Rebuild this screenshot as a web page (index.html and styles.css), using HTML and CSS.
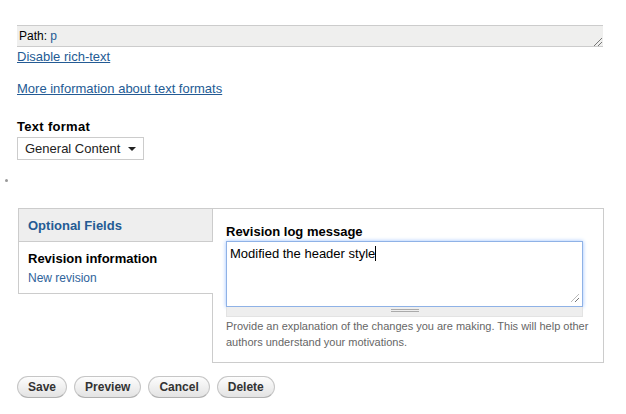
FILE: index.html
```html
<!DOCTYPE html>
<html>
  <head>
    <title>Edit page</title>
    <link rel="stylesheet" href="styles.css">
  </head>
  <body>
    <div class="page">
      <div class="path-bar">
        <span>Path: <a href="#">p</a></span>
        <span class="grip"></span>
      </div>
      <div class="toggle-link"><a href="#">Disable rich-text</a></div>
      <div class="format-link"><a href="#">More information about text formats</a></div>

      <div class="format-field">
        <label class="field-label">Text format</label>
        <div class="select">
          <span>General Content</span>
          <span class="select-arrow"></span>
        </div>
      </div>
    </div>

    <div class="bullet"></div>

    <div class="vtabs">
      <div class="vtabs-menu">
        <div class="vtab-head">Optional Fields</div>
        <div class="vtab-item active">
          <strong>Revision information</strong>
          <span class="summary">New revision</span>
        </div>
      </div>
      <div class="vtabs-pane">
        <label class="field-label">Revision log message</label>
        <div class="textarea-wrap">
          <div class="textarea">Modified the header style<span class="caret"></span><span class="grip"></span></div>
          <div class="grippie"></div>
        </div>
        <div class="description">
          Provide an explanation of the changes you are making. This will help other
          authors understand your motivations.
        </div>
      </div>
    </div>

    <div class="actions">
      <button>Save</button>
      <button>Preview</button>
      <button>Cancel</button>
      <button>Delete</button>
    </div>
  </body>
</html>
```

FILE: styles.css
```css
:root {
  --link-color: #245b94;
  --border-color: #cccccc;
  --bar-bg: #efefee;
}

* {
  box-sizing: border-box;
}

body {
  font-family: "Liberation Sans", Arial, sans-serif;
  font-size: 12px;
  margin: 0;
  padding-top: 25px;
  background: #ffffff;
  color: #000000;
}

a {
  color: var(--link-color);
}

.page {
  margin: 0 23px 0 17px;
}

.path-bar {
  display: flex;
  justify-content: space-between;
  align-items: center;
  height: 22px;
  padding: 0 1px 0 2px;
  border-top: 1px solid var(--border-color);
  border-bottom: 1px solid var(--border-color);
  background-color: var(--bar-bg);
  line-height: 20px;
}

.path-bar a {
  text-decoration: none;
}

.grip {
  width: 10px;
  height: 10px;
  align-self: flex-end;
  background: repeating-linear-gradient(
    135deg,
    transparent 0,
    transparent 2px,
    #777 2px,
    #777 3px
  );
  clip-path: polygon(100% 0, 100% 100%, 0 100%);
}

.toggle-link {
  margin-top: 1px;
  font-size: 13px;
  line-height: 18px;
}

.format-link {
  margin-top: 14px;
  font-size: 13px;
  line-height: 18px;
}

.format-field {
  margin-top: 21px;
}

.field-label {
  display: block;
  font-size: 13px;
  font-weight: bold;
  line-height: 16px;
}

.format-field .field-label {
  letter-spacing: 0.3px;
}

.select {
  display: inline-flex;
  align-items: center;
  justify-content: space-between;
  width: 127px;
  height: 23px;
  margin-top: 2px;
  padding: 0 7px 0 7px;
  border: 1px solid var(--border-color);
  font-size: 13px;
  color: #222;
}

.select-arrow {
  width: 0;
  height: 0;
  border-left: 4px solid transparent;
  border-right: 4px solid transparent;
  border-top: 4px solid #222;
}

.bullet {
  width: 3px;
  height: 3px;
  margin: 19px 0 0 5px;
  border-radius: 50%;
  background-color: #999;
}

.vtabs {
  display: flex;
  align-items: flex-start;
  margin: 26px 22px 0 18px;
}

.vtabs-menu {
  flex-shrink: 0;
  width: 195px;
  border: 1px solid var(--border-color);
  border-right: none;
  position: relative;
  z-index: 1;
}

.vtab-head {
  height: 33px;
  padding: 9px 9px 7px;
  border-right: 1px solid var(--border-color);
  border-bottom: 1px solid var(--border-color);
  background-color: #eeeeee;
  color: var(--link-color);
  font-size: 13px;
  font-weight: bold;
  line-height: 16px;
}

.vtab-item {
  height: 51px;
  margin-right: -1px;
  padding: 8px 9px 0;
  background-color: #ffffff;
}

.vtab-item strong {
  display: block;
  font-size: 13px;
  line-height: 17px;
}

.summary {
  display: block;
  margin-top: 3px;
  color: #2f639b;
  line-height: 16px;
}

.vtabs-pane {
  flex: 1;
  height: 155px;
  margin-left: -1px;
  padding: 15px 20px 0 13px;
  border: 1px solid var(--border-color);
}

.textarea-wrap {
  margin-top: 1px;
}

.textarea {
  display: flex;
  height: 66px;
  padding: 4px 3px;
  border: 1px solid #8fb2e6;
  box-shadow: 0 0 4px #9cc2ff;
  font-size: 13px;
  line-height: 16px;
}

.caret {
  width: 1px;
  height: 15px;
  background-color: #000;
}

.textarea .grip {
  margin-left: auto;
  width: 8px;
  height: 8px;
}

.grippie {
  height: 10px;
  border: 1px solid #e3e3e3;
  border-top: none;
  background-color: #eeeeee;
  background-image: linear-gradient(
    #eee 3px,
    #aaa 3px,
    #aaa 4px,
    #eee 4px,
    #eee 5px,
    #aaa 5px,
    #aaa 6px,
    #eee 6px
  );
  background-size: 28px 10px;
  background-position: center;
  background-repeat: no-repeat;
}

.description {
  margin: 1px -14px 0 0;
  color: #666666;
  font-size: 11px;
  line-height: 16px;
}

.actions {
  display: flex;
  gap: 7px;
  margin: 13px 0 0 17px;
}

button {
  height: 22px;
  padding: 0 10px;
  border: 1px solid #c6c6c6;
  border-bottom-color: #b0b0b0;
  border-radius: 11px;
  background: linear-gradient(#fdfdfd, #e3e3e3);
  color: #333;
  font-family: "Liberation Sans", Arial, sans-serif;
  font-size: 12px;
  font-weight: bold;
  cursor: pointer;
}
```
